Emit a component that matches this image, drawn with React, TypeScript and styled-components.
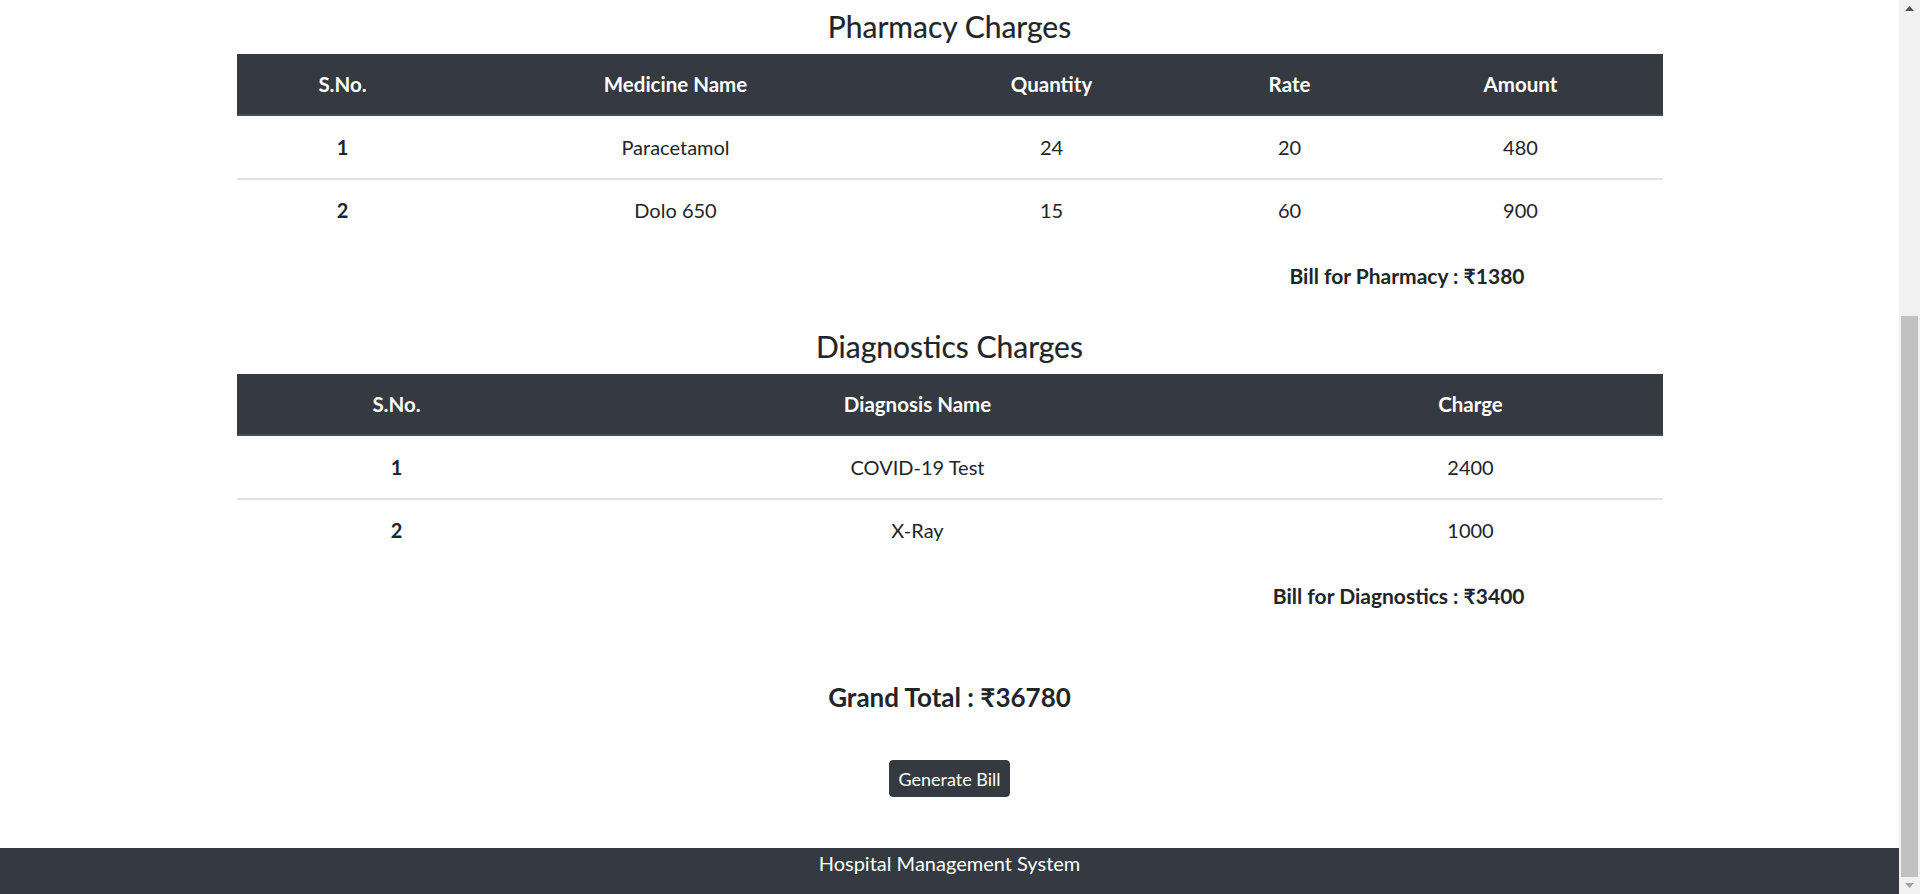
import React from "react";
import styled, { createGlobalStyle } from "styled-components";

const GlobalStyle = createGlobalStyle`
  html, body {
    margin: 0;
    padding: 0;
    height: 100%;
    overflow: hidden;
    background: #ffffff;
  }
  body {
    font-family: Lato, "Open Sans", "Noto Sans", sans-serif;
    color: #212529;
  }
  * { box-sizing: border-box; }
`;

const Shell = styled.div`
  display: flex;
  height: 100vh;
  width: 100vw;
`;

const Main = styled.div`
  flex: 1;
  display: flex;
  flex-direction: column;
  min-width: 0;
`;

const Content = styled.div`
  width: 1426px;
  margin: 0 auto;
  padding-top: 9px;
  display: flex;
  flex-direction: column;
`;

const Section = styled.section<{ $gap?: number }>`
  display: flex;
  flex-direction: column;
  margin-top: ${(p) => p.$gap ?? 0}px;
`;

const Title = styled.h3`
  margin: 0 0 11px;
  font-size: 30px;
  line-height: 34px;
  font-weight: 400;
  text-align: center;
  color: #212529;
  -webkit-text-stroke: 0.2px #212529;
`;

const Table = styled.table`
  width: 100%;
  table-layout: fixed;
  border-collapse: separate;
  border-spacing: 0;
  font-size: 20px;
`;

const HeadCell = styled.th`
  background: #343a40;
  color: #ffffff;
  font-weight: 700;
  font-size: 20.5px;
  height: 62px;
  padding: 0 12px;
  border-bottom: 2px solid #454d55;
  text-align: center;
  vertical-align: middle;
  line-height: 24px;
`;

const Cell = styled.td<{ $first?: boolean; $bold?: boolean }>`
  height: 62px;
  padding: 0 12px;
  text-align: center;
  vertical-align: middle;
  line-height: 24px;
  font-weight: ${(p) => (p.$bold ? 700 : 400)};
  border-top: ${(p) => (p.$first ? "none" : "2px solid #dee2e6")};
`;

const BillLine = styled.h6`
  margin: 21px 0 0;
  padding-right: 138px;
  font-size: 21px;
  line-height: 30px;
  font-weight: 700;
  text-align: right;
`;

const GrandTotal = styled.h5`
  margin: 68px 0 0;
  font-size: 26px;
  line-height: 36px;
  font-weight: 700;
  text-align: center;
`;

const ButtonRow = styled.div`
  display: flex;
  justify-content: center;
  margin-top: 45px;
`;

const Button = styled.button`
  height: 37px;
  width: 121px;
  padding: 0;
  background: #343a40;
  border: 1px solid #343a40;
  border-radius: 4px;
  color: #ffffff;
  font-family: Lato, "Open Sans", sans-serif;
  font-size: 18px;
  line-height: 24px;
  white-space: nowrap;
  cursor: pointer;
`;

const Footer = styled.footer`
  margin-top: auto;
  height: 46px;
  background: #343a40;
  color: #ffffff;
  font-size: 20px;
  line-height: 30px;
  text-align: center;
  padding-top: 0;
`;

const ScrollTrack = styled.div`
  width: 21px;
  flex: none;
  background: #f1f1f1;
  display: flex;
  flex-direction: column;
  align-items: center;
`;

const ArrowBox = styled.div`
  height: 17px;
  width: 100%;
  display: flex;
  align-items: center;
  justify-content: center;
`;

const Spacer = styled.div`
  flex: 1;
`;

const Thumb = styled.div`
  width: 17px;
  height: 561px;
  background: #c1c1c1;
`;

type Col = { label: string; width: number };

const pharmacyCols: Col[] = [
  { label: "S.No.", width: 212 },
  { label: "Medicine Name", width: 454 },
  { label: "Quantity", width: 298 },
  { label: "Rate", width: 178 },
  { label: "Amount", width: 284 },
];

const pharmacyRows = [
  ["1", "Paracetamol", "24", "20", "480"],
  ["2", "Dolo 650", "15", "60", "900"],
];

const diagCols: Col[] = [
  { label: "S.No.", width: 320 },
  { label: "Diagnosis Name", width: 722 },
  { label: "Charge", width: 384 },
];

const diagRows = [
  ["1", "COVID-19 Test", "2400"],
  ["2", "X-Ray", "1000"],
];

function ChargeTable({ cols, rows }: { cols: Col[]; rows: string[][] }) {
  return (
    <Table>
      <colgroup>
        {cols.map((c) => (
          <col key={c.label} style={{ width: c.width }} />
        ))}
      </colgroup>
      <thead>
        <tr>
          {cols.map((c) => (
            <HeadCell key={c.label}>{c.label}</HeadCell>
          ))}
        </tr>
      </thead>
      <tbody>
        {rows.map((r, i) => (
          <tr key={i}>
            {r.map((v, j) => (
              <Cell key={j} $first={i === 0} $bold={j === 0}>
                {v}
              </Cell>
            ))}
          </tr>
        ))}
      </tbody>
    </Table>
  );
}

export default function App() {
  return (
    <>
      <GlobalStyle />
      <Shell>
        <Main>
          <Content>
            <Section>
              <Title>Pharmacy Charges</Title>
              <ChargeTable cols={pharmacyCols} rows={pharmacyRows} />
              <BillLine>Bill for Pharmacy : ₹1380</BillLine>
            </Section>
            <Section $gap={38}>
              <Title>Diagnostics Charges</Title>
              <ChargeTable cols={diagCols} rows={diagRows} />
              <BillLine>Bill for Diagnostics : ₹3400</BillLine>
            </Section>
            <GrandTotal>Grand Total : ₹36780</GrandTotal>
            <ButtonRow>
              <Button type="button">Generate Bill</Button>
            </ButtonRow>
          </Content>
          <Footer>Hospital Management System</Footer>
        </Main>
        <ScrollTrack>
          <ArrowBox>
            <svg width="9" height="5" viewBox="0 0 9 5">
              <path d="M0 5 L4.5 0 L9 5 Z" fill="#505050" />
            </svg>
          </ArrowBox>
          <Spacer />
          <Thumb />
          <ArrowBox>
            <svg width="9" height="5" viewBox="0 0 9 5">
              <path d="M0 0 L9 0 L4.5 5 Z" fill="#a3a3a3" />
            </svg>
          </ArrowBox>
        </ScrollTrack>
      </Shell>
    </>
  );
}
